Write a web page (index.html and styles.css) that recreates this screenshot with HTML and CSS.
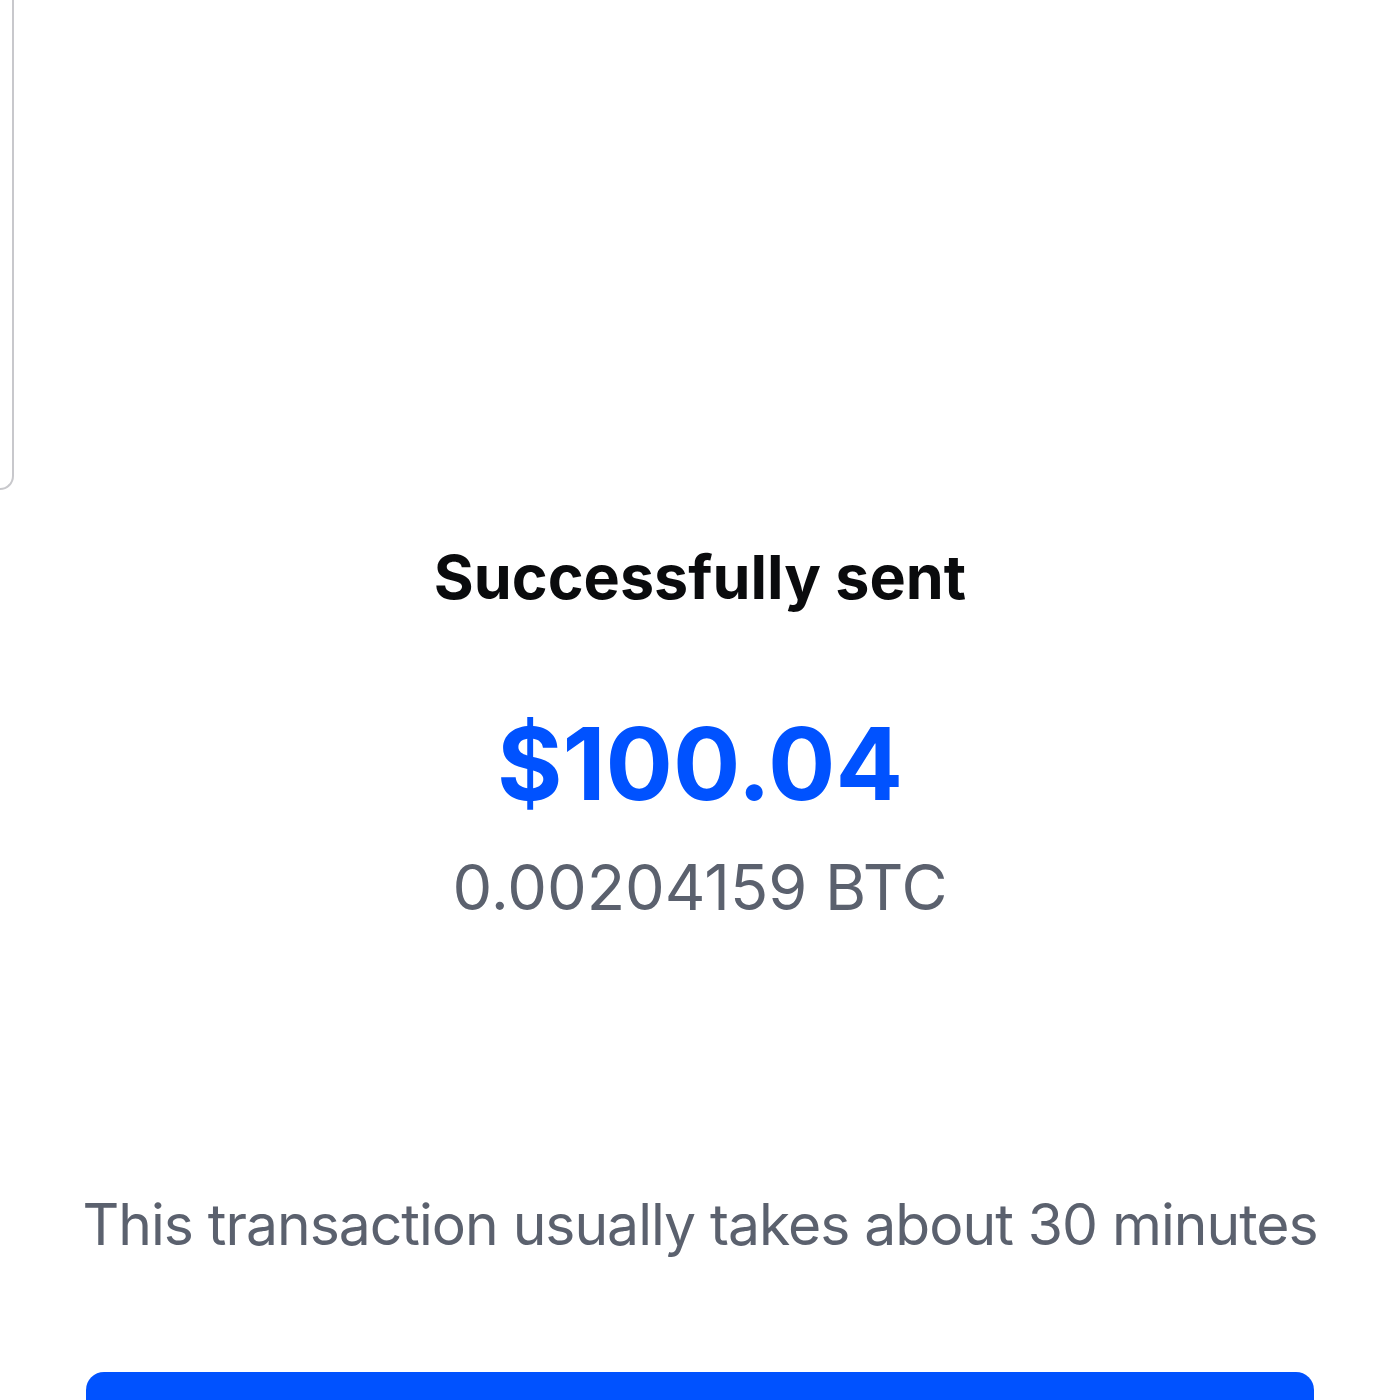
FILE: index.html
```html
<!DOCTYPE html>
<html lang="en">

<head>
    <meta charset="UTF-8">
    <meta name="viewport" content="width=device-width, initial-scale=1.0">
    <title>Successfully sent</title>
    <link rel="stylesheet" href="styles.css">
</head>

<body>
    <div class="page">
        <div class="edge-card"></div> <!-- card edge from previous panel -->

        <div class="summary">
            <h1 class="title">Successfully sent</h1>
            <div class="amount">$100.04</div>
            <div class="crypto">0.00204159 BTC</div>
        </div>

        <p class="note">This transaction usually takes about 30 minutes</p>
        <button class="done-btn" aria-label="Done"></button>
    </div>
</body>

</html>
```

FILE: styles.css
```css
html,
body {
    width: 100%;
    height: 100%;
    margin: 0;
    padding: 0;
    background-color: #ffffff;
    overflow: hidden;
}

.page {
    display: flex;
    flex-direction: column;
    font-family: Inter, "Liberation Sans", sans-serif;
}

.edge-card {
    width: 12px;
    height: 488px;
    border-right: 2px solid #c8c8cc;
    border-bottom: 2px solid #c8c8cc;
    border-bottom-right-radius: 14px;
}

.summary {
    display: flex;
    flex-direction: column;
    align-items: center;
}

.title {
    margin: 51px 0 0 0;
    font-size: 61px;
    font-weight: 700;
    line-height: 72px;
    color: #0a0b0d;
}

.amount {
    margin-top: 96px;
    font-size: 100px;
    font-weight: 700;
    line-height: 110px;
    color: #0052ff;
}

.crypto {
    margin-top: 30px;
    font-size: 63px;
    font-weight: 400;
    line-height: 76px;
    color: #5b616e;
}

.note {
    margin: 265px 0 0 0;
    text-align: center;
    font-size: 57px;
    letter-spacing: -1px;
    line-height: 70px;
    color: #5b616e;
}

.done-btn {
    margin: 112px 86px 0 86px;
    height: 130px;
    flex-shrink: 0;
    border: none;
    border-radius: 18px;
    background-color: #0052ff;
}
```
